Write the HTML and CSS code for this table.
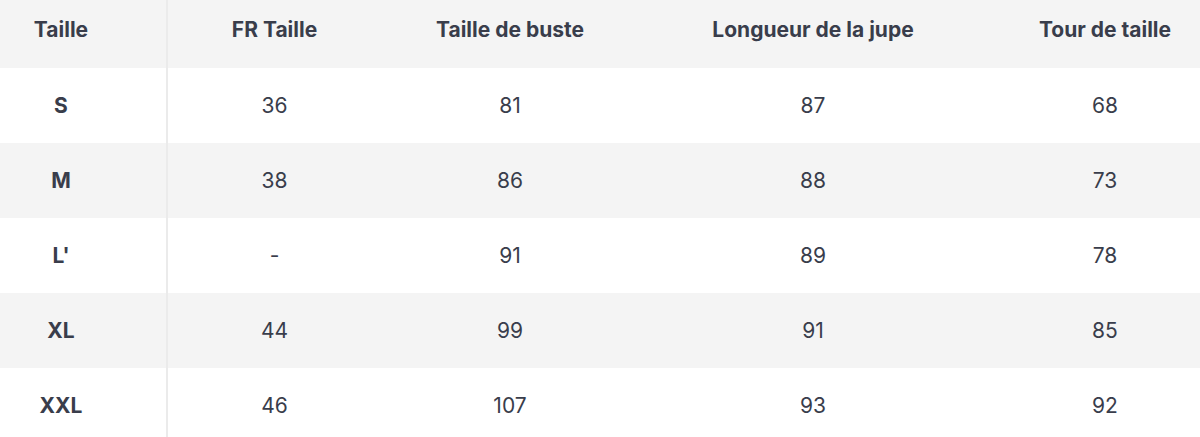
FILE: index.html
```html
<!DOCTYPE html>
<html lang="fr">
<head>
<meta charset="utf-8">
<title>Guide des tailles</title>
<link rel="stylesheet" href="styles.css">
</head>
<body>
<div class="wrap">
<table class="sizes">
  <colgroup>
    <col class="c1"><col class="c2"><col class="c3"><col class="c4"><col class="c5">
  </colgroup>
  <thead>
    <tr><th class="first">Taille</th><th>FR Taille</th><th>Taille de buste</th><th>Longueur de la jupe</th><th>Tour de taille</th></tr>
  </thead>
  <tbody>
    <tr><td class="first">S</td><td>36</td><td>81</td><td>87</td><td>68</td></tr>
    <tr class="alt"><td class="first">M</td><td>38</td><td>86</td><td>88</td><td>73</td></tr>
    <tr><td class="first">L'</td><td>-</td><td>91</td><td>89</td><td>78</td></tr>
    <tr class="alt"><td class="first">XL</td><td>44</td><td>99</td><td>91</td><td>85</td></tr>
    <tr><td class="first">XXL</td><td>46</td><td>107</td><td>93</td><td>92</td></tr>
  </tbody>
</table>
</div>
</body>
</html>
```

FILE: styles.css
```css
html, body {
  margin: 0;
  padding: 0;
  background: #ffffff;
}
body {
  font-family: Inter, "Noto Sans", sans-serif;
  color: #393d4b;
  overflow: hidden;
}
.wrap {
  width: 1200px;
  overflow: hidden;
}
.sizes {
  border-collapse: collapse;
  table-layout: fixed;
  width: 1223px;
}
.c1 { width: 167px; }
.c2 { width: 214px; }
.c3 { width: 258px; }
.c4 { width: 348px; }
.c5 { width: 236px; }
.sizes th, .sizes td {
  text-align: center;
  vertical-align: middle;
  padding: 0;
  white-space: nowrap;
  font-size: 21px;
}
.sizes thead tr {
  background: #f4f4f4;
}
.sizes th {
  height: 58px;
  padding-bottom: 10px;
  font-weight: 700;
}
.sizes td {
  height: 75px;
  font-weight: 400;
}
.sizes tr.alt {
  background: #f4f4f4;
}
.sizes .first {
  font-weight: 700;
  padding-right: 44px;
  border-right: 2px solid #ebebeb;
}
```
